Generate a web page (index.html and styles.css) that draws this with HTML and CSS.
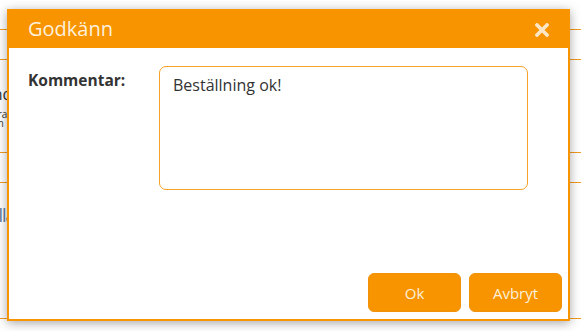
FILE: index.html
```html
<!DOCTYPE html>
<html lang="sv">
  <head>
    <meta charset="UTF-8" />
    <meta name="viewport" content="width=device-width, initial-scale=1.0" />
    <title>Godkänn</title>
    <link rel="stylesheet" href="styles.css">
  </head>
  <body>
    <div id="page">
      <div class="row row-head"></div>
      <div class="row row-tall">
        <p class="cell-text">Ärende</p>
        <p class="cell-text cell-small">Uppdrag<br />Datum</p>
      </div>
      <div class="row row-head"></div>
      <div class="row row-last">
        <p class="cell-text cell-blue">Alla</p>
      </div>
    </div>

    <div id="dialog">
      <div id="dialog-title">
        <span>Godkänn</span>
        <span id="close">
          <svg width="14" height="14" viewBox="0 0 14 14">
            <path d="M2 2 L12 12 M12 2 L2 12" stroke="#fde6c6" stroke-width="3.6" stroke-linecap="square" />
          </svg>
        </span>
      </div>
      <div id="dialog-body">
        <label for="comment" id="comment-label">Kommentar:</label>
        <textarea id="comment">Beställning ok!</textarea>
      </div>
      <div id="dialog-buttons">
        <button class="btn">Ok</button>
        <button class="btn">Avbryt</button>
      </div>
    </div>
  </body>
</html>
```

FILE: styles.css
```css
body {
  margin: 0;
  font-family: "Open Sans", "DejaVu Sans", sans-serif;
  background: #fff;
  color: #333;
}
#page {
  padding-top: 29px;
}
.row {
  border-top: 1px solid #f39a1e;
}
.row-head {
  height: 29px;
}
.row-tall {
  height: 93px;
  padding-top: 24px;
  box-sizing: border-box;
}
.row-last {
  height: 137px;
  border-bottom: 1px solid #f39a1e;
  padding-top: 22px;
  box-sizing: border-box;
}
.cell-text {
  margin: 0 0 6px -33px;
  font-size: 16px;
  line-height: 20px;
}
.cell-small {
  font-size: 10px;
  line-height: 9px;
  margin-left: -28px;
}
.cell-blue {
  color: #5a7a9c;
  font-size: 18px;
  margin-left: -12px;
  letter-spacing: -1px;
}
#dialog {
  position: absolute;
  left: 7px;
  top: 9px;
  width: 563px;
  height: 312px;
  box-sizing: border-box;
  border: 2px solid #f79400;
  border-top: none;
  background: #fff;
  display: flex;
  flex-direction: column;
  box-shadow: 0 2px 10px rgba(0, 0, 0, 0.35);
}
#dialog-title {
  height: 39px;
  margin: 0 -2px;
  background: #f79400;
  color: #fdf0dd;
  font-size: 20px;
  display: flex;
  align-items: center;
  justify-content: space-between;
  padding: 0 21px 0 21px;
  flex-shrink: 0;
}
#close {
  display: flex;
  margin-top: 2px;
}
#dialog-body {
  display: flex;
  padding: 18px 19px 0 19px;
  flex: 1;
}
#comment-label {
  width: 131px;
  font-size: 15.5px;
  font-weight: bold;
  color: #333;
  padding-top: 3px;
}
#comment {
  width: 369px;
  height: 124px;
  box-sizing: border-box;
  border: 1px solid #f7a128;
  border-radius: 7px;
  padding: 7px 13px;
  font-family: "Open Sans", "DejaVu Sans", sans-serif;
  font-size: 16px;
  color: #333;
  resize: none;
  outline: none;
}
#dialog-buttons {
  display: flex;
  justify-content: flex-end;
  gap: 8px;
  padding: 0 6px 7px 0;
}
.btn {
  width: 93px;
  height: 39px;
  border: 1px solid #f0920a;
  border-radius: 6px;
  background: #f79400;
  color: #fdf0dd;
  font-family: "Open Sans", "DejaVu Sans", sans-serif;
  font-size: 15px;
}
```
